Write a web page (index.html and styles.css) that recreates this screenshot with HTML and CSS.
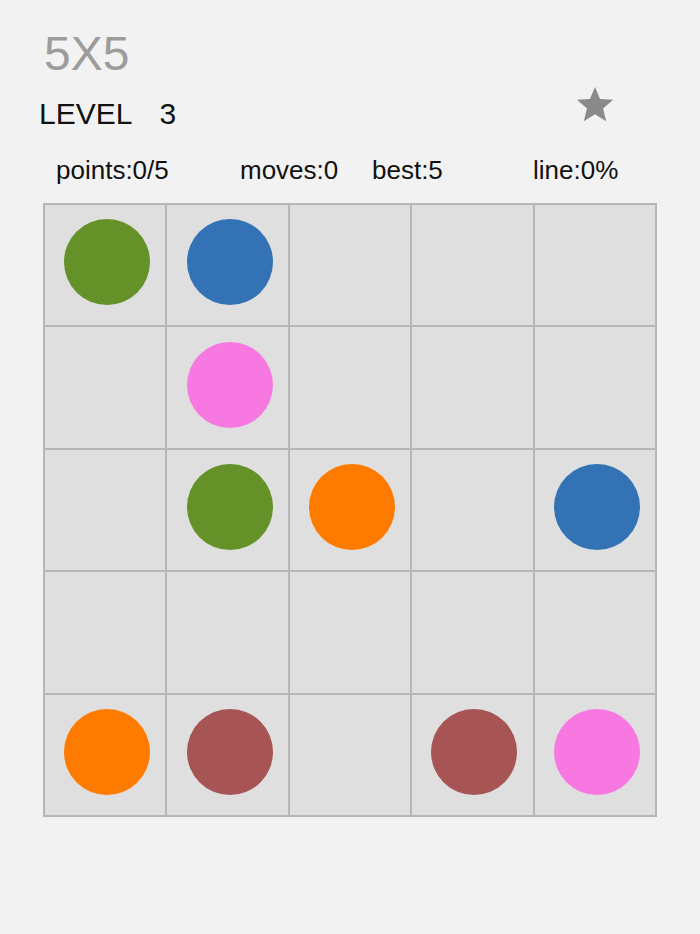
FILE: index.html
```html
<!DOCTYPE html>
<html lang="en">
<head>
<meta charset="utf-8">
<title>5X5</title>
<link rel="stylesheet" href="styles.css">
</head>
<body>
<div class="page">
  <div class="title">5X5</div>
  <div class="level-row">
    <div class="level"><span class="level-label">LEVEL</span><span class="level-num">3</span></div>
    <svg class="star" viewBox="0 0 40 40" width="38" height="38" aria-hidden="true">
      <polygon points="20,1 25.3,13.6 39,14.6 28.5,23.6 31.8,37 20,29.8 8.2,37 11.5,23.6 1,14.6 14.7,13.6" fill="#8a8a8a"/>
    </svg>
  </div>
  <div class="stats">
    <span>points:0/5</span>
    <span>moves:0</span>
    <span>best:5</span>
    <span>line:0%</span>
  </div>
  <div class="board">
    <div class="cell"><div class="dot green"></div></div>
    <div class="cell"><div class="dot blue"></div></div>
    <div class="cell"></div>
    <div class="cell"></div>
    <div class="cell"></div>

    <div class="cell"></div>
    <div class="cell"><div class="dot pink"></div></div>
    <div class="cell"></div>
    <div class="cell"></div>
    <div class="cell"></div>

    <div class="cell"></div>
    <div class="cell"><div class="dot green"></div></div>
    <div class="cell"><div class="dot orange"></div></div>
    <div class="cell"></div>
    <div class="cell"><div class="dot blue"></div></div>

    <div class="cell"></div>
    <div class="cell"></div>
    <div class="cell"></div>
    <div class="cell"></div>
    <div class="cell"></div>

    <div class="cell"><div class="dot orange"></div></div>
    <div class="cell"><div class="dot brown"></div></div>
    <div class="cell"></div>
    <div class="cell"><div class="dot brown"></div></div>
    <div class="cell"><div class="dot pink"></div></div>
  </div>
</div>
</body>
</html>
```

FILE: styles.css
```css
html, body {
  margin: 0;
  padding: 0;
  background: #f2f2f2;
}

body {
  width: 700px;
  height: 934px;
  overflow: hidden;
  font-family: "Liberation Sans", Arial, sans-serif;
  color: #111;
}

.page {
  padding-top: 30px;
}

.title {
  font-size: 48px;
  line-height: 48px;
  height: 48px;
  color: #9c9c9c;
  padding-left: 44px;
}

.level-row {
  display: flex;
  justify-content: space-between;
  align-items: flex-start;
  margin-top: 8px;
  padding-left: 39px;
  padding-right: 86px;
}

.level {
  margin-top: 13px;
  font-size: 30px;
  line-height: 30px;
  height: 30px;
  color: #111;
}

.level-num {
  margin-left: 27px;
}

.star {
  display: block;
}

.stats {
  display: grid;
  grid-template-columns: 184px 132px 161px auto;
  margin-top: 28px;
  padding-left: 56px;
  font-size: 26px;
  line-height: 26px;
  height: 26px;
  color: #111;
}

.board {
  display: grid;
  grid-template-columns: repeat(5, 120.4px);
  grid-template-rows: repeat(5, 120.4px);
  gap: 2px;
  padding: 2px;
  width: max-content;
  background: #b6b6b6;
  margin-top: 20px;
  margin-left: 43px;
}

.cell {
  background: #dfdfdf;
  display: flex;
  align-items: center;
  justify-content: center;
  box-sizing: border-box;
  padding: 0 0 6px 4px;
}

.dot {
  width: 86px;
  height: 86px;
  border-radius: 50%;
}

.green { background: #649229; }
.blue { background: #3372b4; }
.pink { background: #f778e1; }
.orange { background: #ff7b00; }
.brown { background: #a75454; }
```
